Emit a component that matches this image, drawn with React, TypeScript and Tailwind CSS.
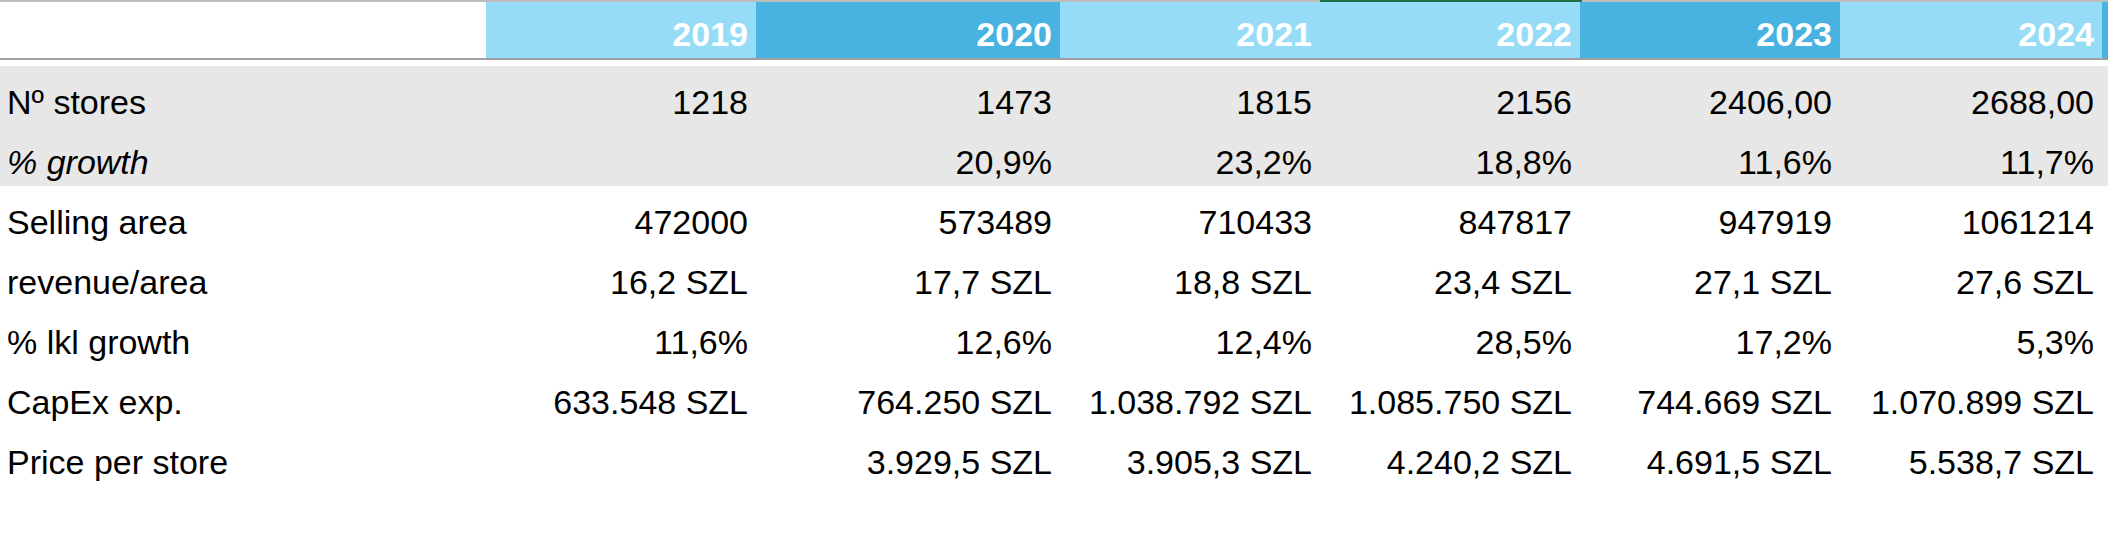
import React from "react";

const years = ["2019", "2020", "2021", "2022", "2023", "2024"];

// header colours alternate light / dark like the Excel sheet
const headBg = [
  "bg-[#96dcf7]",
  "bg-[#48b2e1]",
  "bg-[#96dcf7]",
  "bg-[#96dcf7]",
  "bg-[#48b2e1]",
  "bg-[#96dcf7]",
];

type Row = { label: string; values: string[]; italic?: boolean; shaded?: boolean };

const rows: Row[] = [
  { label: "Nº stores", values: ["1218", "1473", "1815", "2156", "2406,00", "2688,00"], shaded: true },
  { label: "% growth", values: ["", "20,9%", "23,2%", "18,8%", "11,6%", "11,7%"], italic: true, shaded: true },
  { label: "Selling area", values: ["472000", "573489", "710433", "847817", "947919", "1061214"] },
  { label: "revenue/area", values: ["16,2 SZL", "17,7 SZL", "18,8 SZL", "23,4 SZL", "27,1 SZL", "27,6 SZL"] },
  { label: "% lkl growth", values: ["11,6%", "12,6%", "12,4%", "28,5%", "17,2%", "5,3%"] },
  { label: "CapEx exp.", values: ["633.548 SZL", "764.250 SZL", "1.038.792 SZL", "1.085.750 SZL", "744.669 SZL", "1.070.899 SZL"] },
  { label: "Price per store", values: ["", "3.929,5 SZL", "3.905,3 SZL", "4.240,2 SZL", "4.691,5 SZL", "5.538,7 SZL"] },
];

const cols = "grid grid-cols-[486px_270px_304px_260px_260px_260px_262px_6px]";

export default function App() {
  return (
    <div className="w-[2108px] h-[538px] bg-white overflow-hidden font-['Liberation_Sans',Arial,sans-serif] text-[34px] leading-[normal] text-black">
      {/* top sheet edge: grey with the green selection marker over 2022 */}
      <div className="flex h-[2px]">
        <div className="w-[1320px] bg-[#bdbdbd]" />
        <div className="w-[262px] bg-[#1e7145]" />
        <div className="flex-1 bg-[#bdbdbd]" />
      </div>

      <div className={`${cols} h-[58px] border-b-2 border-[#a0a0a0]`}>
        <div />
        {years.map((y, i) => (
          <div key={y} className={`${headBg[i]} flex items-end justify-end pr-[8px] pb-[4px] font-bold text-white`}>
            {y}
          </div>
        ))}
        <div className="bg-[#48b2e1]" />
      </div>

      <div className="mt-[6px]">
        {rows.map((r) => (
          <div key={r.label} className={`${cols} h-[60px] ${r.shaded ? "bg-[#e7e7e7]" : ""}`}>
            <div className={`flex items-end pl-[7px] pb-[4px] ${r.italic ? "italic" : ""}`}>{r.label}</div>
            {r.values.map((v, i) => (
              <div key={i} className="flex items-end justify-end pr-[8px] pb-[4px] whitespace-nowrap">
                {v}
              </div>
            ))}
            <div />
          </div>
        ))}
      </div>
    </div>
  );
}
